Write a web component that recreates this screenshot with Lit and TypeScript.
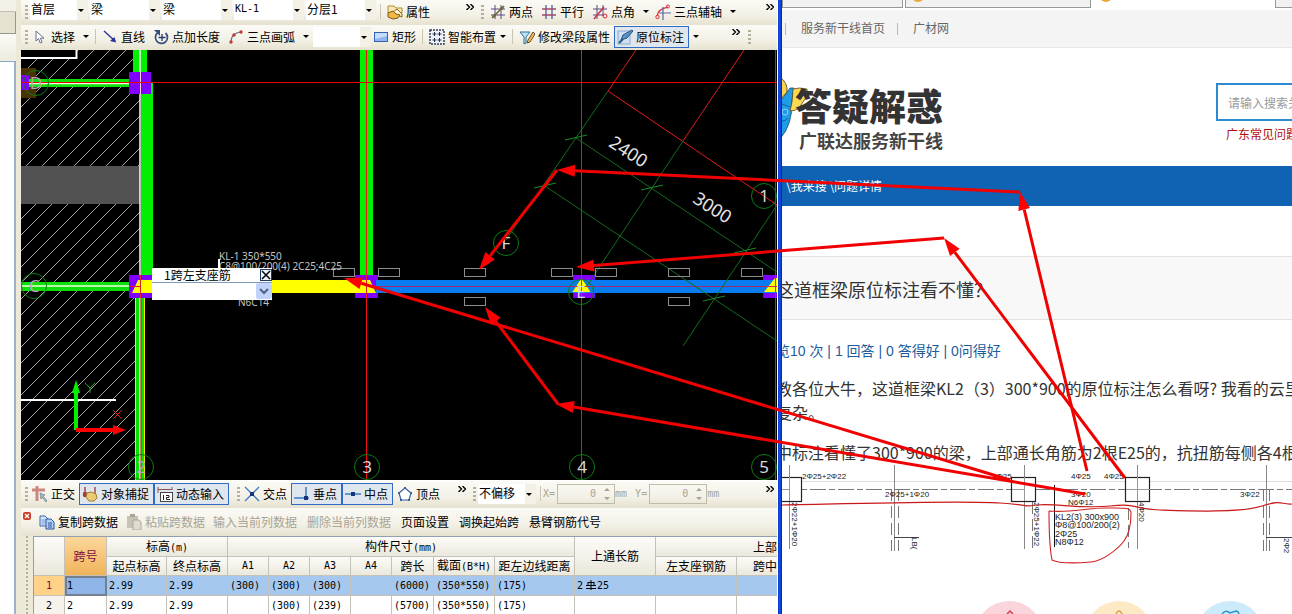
import { LitElement, html, svg, css } from "lit";
import { customElement } from "lit/decorators.js";
import { classMap } from "lit/directives/class-map.js";

const ICONS: Record<string, unknown> = {
  props: svg`<path d="M1 2h6l2 2h6v5H1z" fill="#f8e6b4" stroke="#b58a2e"/><path d="M6 8l4-3 5 5v3l-5-2z" fill="#fff4cc" stroke="#8a6420"/><path d="M1 9l5-2 3 3 4 1-2 3-5 1-5-2z" fill="#f0b840" stroke="#7c5a1c"/>`,
  twoPoint: svg`<path d="M5 1v14M11 1v14M1 5h14M1 11h14" stroke="#5a4a86" fill="none"/><path d="M2 14L14 2" stroke="#6b6534" stroke-width="1.6"/><circle cx="4" cy="12" r="1.6" fill="#6b6534"/><circle cx="12" cy="4" r="1.6" fill="#6b6534"/>`,
  parallel: svg`<path d="M5 1v14M11 1v14" stroke="#4c5ba6" stroke-width="1.3"/><path d="M1 5h14M1 11h14" stroke="#a0496a" stroke-width="1.3"/>`,
  angle: svg`<path d="M5 1v14M11 1v11M1 5h14M1 11h11" stroke="#5a4a86" fill="none"/><path d="M2 15L12 3" stroke="#d0304a" stroke-width="1.5"/><circle cx="13" cy="12" r="2" fill="none" stroke="#e02030"/>`,
  threeAxis: svg`<path d="M2 12Q3 5 13 3" stroke="#d8404a" stroke-width="1.3" fill="none"/><path d="M8 3v13M4 9h12" stroke="#5868a8" stroke-width="1.2"/><circle cx="2.500" cy="13" r="1.700" fill="none" stroke="#e03038"/><circle cx="13" cy="2.500" r="1.500" fill="none" stroke="#e03038"/>`,
  cursor: svg`<path d="M4 2v10l2.500-2.300L8.200 14l1.900-.8L8.400 9.200H12z" fill="#fff" stroke="#667090"/>`,
  line: svg`<path d="M2 2l11 10" stroke="#25309a" stroke-width="1.300"/><path d="M14 13.500l-6-1.500 4.500-4z" fill="#25309a"/>`,
  pointLen: svg`<path d="M5 3.500A6 6 0 1 0 12.500 4" fill="none" stroke="#34507a" stroke-width="1.700"/><path d="M1 1h6v6z" fill="#34507a"/><path d="M9 5v7M5.500 8.500h7" stroke="#2b3a66" stroke-width="1.300"/>`,
  arc: svg`<path d="M3 13Q3 4 13 3" fill="none" stroke="#6b7280" stroke-width="1.200"/><circle cx="3" cy="13" r="1.700" fill="#c03838"/><circle cx="6" cy="6" r="1.700" fill="#c03838"/><circle cx="13" cy="3" r="1.700" fill="#c03838"/>`,
  rect: svg`<rect x="1.500" y="3.500" width="13" height="9" fill="#8fb6f2" stroke="#3461b4"/><path d="M2 4h12v3L2 10z" fill="#c6dcfb"/>`,
  smart: svg`<rect x="1" y="1" width="14" height="14" fill="#eef2f8" stroke="#30405c" stroke-width="1.500" stroke-dasharray="2 1"/><path d="M5.500 3v4M3.500 5h4M10.500 3v4M8.500 5h4M5.500 9v4M3.500 11h4M10.500 9v4M8.500 11h4" stroke="#22304c"/>`,
  modify: svg`<path d="M1 3h10L7 8v6l-2 1V8z" fill="#bfe3f3" stroke="#33709c"/><path d="M9 11l5-8 2 2-5 8-3 1z" fill="#e9c060" stroke="#6d4c1d"/>`,
  annotate: svg`<rect x="1" y="2" width="12" height="13" fill="#cfe0f4" stroke="#8aa8cc"/><path d="M4 11l2-5 9-5 1 1-6 7z" fill="#5c92c8" stroke="#28527f"/><path d="M2 14l4-4" stroke="#28527f" stroke-width="2"/>`,
  ortho: svg`<path d="M0 4h13M5 0v15" stroke="#cc8880" stroke-width="3"/><path d="M8 7l5 2-2 1 4 5-1 1-4-5-1 2z" fill="#a4bcc0" stroke="#6f8c92" stroke-width=".8"/>`,
  snap: svg`<path d="M3 1v8M13 1v7M1 7h4" stroke="#9c3430" stroke-width="1.300"/><circle cx="3" cy="9" r="2.200" fill="#a83c34"/><path d="M5 7l4-1 5 2 1 4-3 3H7l-3-4z" fill="#ecca74" stroke="#a07c30"/>`,
  dyn: svg`<path d="M1 1v6M15 1v3M1 3.500h14" stroke="#8c5050" fill="none"/><rect x="3.500" y="6.500" width="12" height="9" fill="#fff" stroke="#444"/><path d="M6.500 9v5M9 9.500h3v2H9.500v2H13" stroke="#222" fill="none"/>`,
  cross: svg`<path d="M1 1l14 14M15 1L1 15" stroke="#3d7cc4" stroke-width="1.300"/><rect x="6" y="6" width="4" height="4" fill="#16357c"/>`,
  perp: svg`<path d="M0 12h15M12 1v11" stroke="#3d7cc4" stroke-width="1.500"/><rect x="10" y="10" width="4" height="4" fill="#16357c"/>`,
  mid: svg`<path d="M0 8h16" stroke="#3d7cc4" stroke-width="1.500"/><rect x="6" y="6" width="4" height="4" fill="#16357c"/>`,
  vertex: svg`<path d="M8 2l6 5-2 7H4L2 7z" fill="#fff" stroke="#3c5f9e" stroke-width="1.200"/><path d="M7 1h2v2H7zM13 6h2v2h-2zM1 6h2v2H1zM3 13h2v2H3zM11 13h2v2h-2z" fill="#3c5f9e"/>`,
  copy: svg`<path d="M1 2h5l3 3v7H1z" fill="#d7e6fb" stroke="#3867b0"/><path d="M2.500 6h4M2.500 8h4M2.500 10h3" stroke="#6f98d4"/><path d="M7 5h5l3 3v7H7z" fill="#b4d0f6" stroke="#28529c"/><path d="M9 9h4M9 11h4M9 13h4" stroke="#28529c"/>`,
  paste: svg`<path d="M1 2h11v12H1z" fill="#c6c3b6"/><path d="M4 0h5v3H4z" fill="#a8a598"/><path d="M7 6h6l2 2v8H7z" fill="#dedbd0" stroke="#aaa79a"/>`,
};

const icon = (name: string) =>
  html`<svg class="ico" viewBox="0 0 16 16" width="16" height="16" aria-hidden="true">${ICONS[name]}</svg>`;

const tool = (name: string, label: string, cls = "") =>
  html`<button class="tool ${cls}">${icon(name)}<span>${label}</span></button>`;

const drop = (cls = "", label = "展开") =>
  html`<button class="drop ${cls}" aria-label=${label}><svg viewBox="0 0 6 3" width="6" height="3"><path d="M0 0h6L3 3z"/></svg></button>`;

const more = () =>
  html`<button class="more" aria-label="更多"><svg viewBox="0 0 8 6" width="8" height="6"><path d="M.5 0l3 3-3 3M4.500 0l3 3-3 3" fill="none" stroke="#000" stroke-width="1.400"/></svg></button>`;

const picker = (value: string, label: string, cls = "") =>
  html`<select class="pick ${cls}" aria-label=${label}><option>${value}</option></select>`;

const sharedStyles = css`
  * { box-sizing: border-box; }
  button, select, input { font: inherit; color: inherit; margin: 0; border-radius: 0; }
  button { background: none; border: 0; padding: 0; white-space: nowrap; }
  svg { display: block; }
`;

@customElement("cad-canvas")
class CadCanvas extends LitElement {
  static styles = [sharedStyles, css`
    :host { display: block; position: relative; overflow: hidden; background: #000; min-height: 0; }
    .scene { position: absolute; inset: 0; width: 100%; height: 100%; font-family: "Noto Sans", sans-serif; }
    .axis { fill: #d8d8d8; font-size: 17px; text-anchor: middle; }
    .faded { fill: #b4a8bc; }
    .dim { fill: #e4e4e4; font-size: 18px; text-anchor: middle; }
    .tag { fill: #c4c4c4; font-size: 10px; }
    .popup { position: absolute; left: 131px; top: 218px; width: 120px; background: #fff;
      font: 12px/14px "Noto Sans CJK SC", sans-serif; color: #000; }
    .head { display: flex; align-items: center; height: 15px; padding-left: 12px; border-bottom: 1px solid #7f9db9; }
    .head label { flex: 1; white-space: nowrap; }
    .close { width: 12px; height: 12px; border: 1px solid #1c3c66; background: #eef4fa; }
    .value { display: block; width: 100%; height: 17px; border: 0; appearance: none; padding: 0;
      background: url("data:image/svg+xml,%3Csvg xmlns='http://www.w3.org/2000/svg' width='16' height='16'%3E%3Crect width='16' height='16' rx='2' fill='%23c2d3fb'/%3E%3Cpath d='M4 6l4 4 4-4' fill='none' stroke='%234d6185' stroke-width='2'/%3E%3C/svg%3E") right top no-repeat #fff; }
  `];

  render() {
    const bubbles: [string, number, number][] = [
      ["D", 36, 83], ["C", 34, 286], ["F", 506, 243], ["1", 764, 196], ["E", 581, 292],
      ["2", 141, 467], ["3", 367, 467], ["4", 582, 467], ["5", 764, 467],
    ];
    const slots: [number, number][] = [
      [333, 268], [378, 268], [464, 268], [551, 268], [595, 268], [668, 268], [741, 268], [464, 297], [668, 297],
    ];
    const ticks: [number, number][] = [[576, 138], [545, 186], [652, 188], [745, 251], [714, 299]];
    return html`
      <svg class="scene" viewBox="21 50 756 430" preserveAspectRatio="xMinYMin slice">
        <defs>
          <pattern id="hatch" width="16" height="16" patternUnits="userSpaceOnUse">
            <path d="M-1 17L17 -1M-1 1L1 -1M15 17L17 15" stroke="#b4b4b4" stroke-width=".9"/>
          </pattern>
        </defs>
        <rect x="21" y="50" width="119" height="430" fill="url(#hatch)"/>
        <rect x="21" y="50" width="55" height="8" fill="#000"/>
        <path d="M21 58h55.500V50" fill="none" stroke="#fff" stroke-width="2"/>
        <rect x="21" y="166" width="119" height="38" fill="#525252"/>
        <path d="M21 400h95" stroke="#fff" stroke-width="2"/>

        <rect x="21" y="68" width="15" height="30" fill="#4a3200"/>
        <path d="M21 79h110v8H21zM21 282h110v9H21z" fill="#0be00b"/>
        <path d="M21 83.500h110M21 286h118" stroke="#f4ffe0" stroke-width="1.500"/>
        <path d="M133 50h14v24h-14zM141 83h12v193h-12zM360 50h13v226h-13z" fill="#00f000"/>
        <rect x="135" y="298" width="10" height="182" fill="#00e400"/>
        <path d="M135.500 298v182M144.500 298v182" stroke="#f0f000"/>
        <path d="M140 50v430" stroke="#fff" stroke-width="1.500"/>
        <path d="M141 298v182" stroke="#e01010"/>
        <rect x="21" y="75" width="8" height="15" fill="#8000ff"/>
        <path d="M129 72h22v22h-22zM129 275h23v23h-23zM355 275h23v23h-23zM573 275h22v23h-22zM763 275h14v23h-14z" fill="#8000ff"/>
        <path d="M140.500 72v22" stroke="#f4d0d0"/>
        <rect x="21" y="82" width="756" height="1" fill="#e80000"/>
        <rect x="366" y="50" width="1" height="430" fill="#f01010"/>
        <rect x="581" y="50" width="1" height="430" fill="#f01010"/>
        <rect x="775" y="50" width="1" height="430" fill="#f01010"/>
        <rect x="148" y="280" width="213" height="13" fill="#ff0"/>
        <path d="M376 280h401v13H376z" fill="#087cf0"/>
        <path d="M376 286.500h401" stroke="#a02c70"/>
        <path d="M138 280h12v13h-18zM361 280h9l6 13h-15z" fill="#ff0"/>
        <path d="M129 286.500h12M140.500 275v23M366.500 275v23" stroke="#e02020"/>
        <path d="M581.500 278l9 14h-18zM775 278v14h-11zM775 278h2v14h-2z" fill="#ff0"/>
        <path d="M574 286.500h15M581.500 276v22M775.500 276v22M764 286.500h13" stroke="#d03030"/>

        <path d="M636 50L608 91L777 205M744 50L683 141" fill="none" stroke="#e81818"/>
        <path d="M608 91L506 240M683 141L587 286M576 138L777 272M545 186L777 341M777 205L683 346" fill="none" stroke="#126c1c"/>
        ${ticks.map(([x, y]) => svg`<path d="M${x - 11} ${y + 2}L${x + 11} ${y - 3}" stroke="#1c8c28"/>`)}
        ${slots.map(([x, y]) => svg`<rect x=${x + 0.5} y=${y + 0.5} width="21" height="8" fill="none" stroke="#8c8c8c"/>`)}
        ${bubbles.map(([t, x, y]) => svg`
          <circle cx=${x} cy=${y} r="12.500" fill="none" stroke="#0c7c14"/>
          <text class=${x < 200 ? "axis faded" : "axis"} x=${x} y=${y + 6}>${t}</text>`)}
        <text class="dim" transform="translate(625 157) rotate(33)">2400</text>
        <text class="dim" transform="translate(709 213) rotate(33)">3000</text>

        <text class="tag" x="219" y="260">KL-1 350*550</text>
        <text class="tag" x="219" y="270">C8@100/200(4) 2C25;4C25</text>
        <text class="tag" x="238" y="306">N6C14</text>
        <path d="M219 259v9" stroke="#fff" stroke-width="2"/>

        <path d="M76 430V392" stroke="#00f000" stroke-width="4"/>
        <path d="M76 380l4 13h-8z" fill="#00f000"/>
        <path d="M76 430h40" stroke="#f00" stroke-width="4"/>
        <path d="M126 430l-13 5v-10z" fill="#f00"/>
        <path d="M85 383l5 5 5-5M90 388v5" fill="none" stroke="#18a828"/>
        <path d="M113 410l9 9M122 410l-9 9" stroke="#e02020"/>
      </svg>
      <div class="popup">
        <div class="head">
          <label for="span-value">1跨左支座筋</label>
          <button class="close" aria-label="关闭"><svg viewBox="0 0 10 10" width="10" height="10"><path d="M1 1l8 8M9 1L1 9" stroke="#000" stroke-width="1.500"/></svg></button>
        </div>
        <select class="value" id="span-value"><option></option></select>
      </div>
    `;
  }
}

@customElement("cad-window")
class CadWindow extends LitElement {
  static styles = [sharedStyles, css`
    :host { display: grid; grid-template-columns: 21px minmax(0, 1fr) 5px; min-height: 0;
      font: 12px/16px "Noto Sans CJK SC", sans-serif; color: #000; }
    .edge { display: flex; flex-direction: column; background: #fff; border-right: 5px solid #ece9d8; }
    .edge-a { height: 12px; background: #f4f1e8; border-bottom: 1px solid #c4c0b0; }
    .edge-b { height: 22px; background: #e6e2d2; border: solid #9a9688; border-width: 0 1px 1px 0; }
    .edge-c { height: 28px; background: linear-gradient(#fbfaf6, #eeebdf); border-bottom: 1px solid #8fa8c8; }
    .edge-d { flex: 1; border-right: 2px solid #9db0cc; }
    .frame { background: linear-gradient(90deg, #fff 1px, #0a3ccc 1px, #1450e8 3px, #001f9c); z-index: 1; }
    .main { display: flex; flex-direction: column; min-width: 0; min-height: 0; background: #ece9d8; }
    cad-canvas { flex: 1; }
    .bar { display: flex; height: 25px; padding-bottom: 2px; }
    .bar, .status, .actions { background: linear-gradient(#fbfaf5, #f3f1e6 60%, #e6e2d0); }
    .group { display: flex; align-items: center; min-width: 0; padding: 0 3px 0 4px; }
    .first { width: 456px; }
    .rest { flex: 1; }
    .grip { flex: none; width: 3px; height: 14px; background: repeating-linear-gradient(#b4b09c 0 2px, transparent 2px 4px); }
    .tool { display: flex; flex: none; align-items: center; gap: 3px; }
    .tool.on { border: 1px solid #316ac5; background: #dfe6ee; height: 22px; padding: 0 4px 0 2px; }
    .dim { color: #a7a496; }
    .pick { flex: none; width: 70px; height: 20px; border: 0; padding: 0 0 2px 1px; appearance: none; align-self: flex-start;
      background: url("data:image/svg+xml,%3Csvg xmlns='http://www.w3.org/2000/svg' width='11' height='20'%3E%3Crect width='11' height='20' fill='%23f3f1e6'/%3E%3Cpath d='M1 9h6L4 12z'/%3E%3C/svg%3E") right top no-repeat #fff; }
    .short { width: 58px; }
    .mid { align-self: center; }
    .mono { font-family: "DejaVu Sans Mono", monospace; font-size: 10px; }
    .sep { flex: none; width: 1px; height: 15px; background: #c9c5b2; }
    .drop { flex: none; width: 6px; height: 16px; display: flex; align-items: center; }
    .more { flex: none; width: 8px; height: 22px; margin-left: auto; }
    .more svg { margin-bottom: 10px; }
    .m2 { margin-left: 2px; } .m4 { margin-left: 4px; } .m6 { margin-left: 6px; } .m8 { margin-left: 8px; } .m10 { margin-left: 10px; }
    .tail { padding-right: 26px; }
    .status { display: flex; height: 28px; padding-bottom: 2px; border-top: 1px solid #fff; }
    .snaps { width: 448px; }
    .num { display: flex; align-items: center; color: #a7a496; }
    .num label { padding-right: 2px; }
    .num input { width: 58px; height: 20px; border: 1px solid #bfbcac; background: transparent; text-align: right; padding: 0 18px 0 0;
      color: #a7a496; }
    .field { display: flex; align-items: center; position: relative; }
    .spin { position: absolute; right: 5px; top: 4px; }
    .actions { display: flex; height: 28px; align-items: center; }
    .shut { width: 8px; height: 8px; margin: 0 0 12px 2px; background: #c8402c; border-radius: 2px; }
    .sheet { display: flex; height: 78px; overflow: hidden; }
    .side { flex: none; width: 12px; padding-left: 5px; }
    .side .grip { display: block; height: 100%; width: 2px; }
    .wrap { flex: 1; min-width: 0; overflow: hidden; border: solid #8fa0b0; border-width: 1px 0 0 1px; background: #fff; }
    table { table-layout: fixed; width: 865px; border-collapse: separate; border-spacing: 0; }
    th, td { height: 19px; padding: 0; font-weight: 400; white-space: nowrap; overflow: hidden; line-height: 14px;
      vertical-align: middle; border: solid #c4c2b8; border-width: 0 1px 1px 0; }
    th { background: linear-gradient(#fcfbf8, #ebe8dc); text-align: center; }
    .over th { height: 20px; }
    td { padding-left: 2px; text-align: left; height: 20px; }
    .key { background: linear-gradient(#fbd79a, #f0b45c); color: #7a1040; }
    tbody th { background: #f5f3ec; height: 20px; }
    .sel td { background: #a6c8ef; }
    .sel th { background: #ffd288; color: #7a1040; }
    .sel .cur { outline: 2px solid #74808e; outline-offset: -2px; background: #8fb4e8; }
    .bar-mark { display: inline-block; vertical-align: -1px; margin: 0 1px 0 3px; }
    .c31 { width: 31px; } .c41 { width: 41px; } .c42 { width: 42px; } .c60 { width: 60px; }
    .c61 { width: 61px; } .c80 { width: 80px; } .c81 { width: 81px; }
  `];

  private offsetField(axis: string, cls: string) {
    return html`<div class="num mono ${cls}">
      <label for="off-${axis}">${axis}=</label>
      <span class="field"><input id="off-${axis}" value="0" disabled>
        <svg class="spin" viewBox="0 0 6 12" width="6" height="12" aria-hidden="true"><path d="M0 3h6L3 0zM0 9h6l-3 3z" fill="#a7a496"/></svg></span>
      <span>mm</span></div>`;
  }

  render() {
    const cols = [31, 42, 60, 61, 41, 41, 41, 41, 42, 61, 80, 81, 81, 81, 81];
    const rows = [
      ["1", "2.99", "2.99", "(300)", "(300)", "(300)", "", "(6000)", "(350*550)", "(175)", "2#25", "", "", ""],
      ["2", "2.99", "2.99", "", "(300)", "(239)", "", "(5700)", "(350*550)", "(175)", "", "", "", ""],
    ];
    const mark = html`<svg class="bar-mark" viewBox="0 0 10 10" width="10" height="10"><path d="M5 0v10M0 8.500h10M0 5.500h10" stroke="#000"/><rect x="2" y="2.500" width="6" height="3" fill="none" stroke="#000"/></svg>`;
    return html`
      <div class="edge"><div class="edge-a"></div><div class="edge-b"></div><div class="edge-c"></div><div class="edge-d"></div></div>
      <div class="main">
        <div class="bar">
          <div class="group first">
            <i class="grip"></i>
            ${picker("首层", "楼层", "short m2")}${picker("梁", "构件类型", "m2")}${picker("梁", "构件", "m2")}
            ${picker("KL-1", "名称", "mono m2")}${picker("分层1", "分层", "m2")}
            <i class="sep m4"></i>${tool("props", "属性", "m6")}${more()}
          </div>
          <div class="group rest">
            <i class="grip"></i>
            ${tool("twoPoint", "两点", "m6")}${tool("parallel", "平行", "m8")}${tool("angle", "点角", "m8")}${drop("m8")}
            ${tool("threeAxis", "三点辅轴", "m6")}${drop("m8")}${more()}
          </div>
        </div>
        <div class="bar">
          <div class="group rest tail">
            <i class="grip"></i>
            ${tool("cursor", "选择", "m4")}${drop("m8")}<i class="sep m6"></i>
            ${tool("line", "直线", "m6")}${tool("pointLen", "点加长度", "m8")}${tool("arc", "三点画弧", "m8")}${drop("m8")}
            ${picker("", "参数", "short mid m4")}${tool("rect", "矩形", "m2")}<i class="sep m6"></i>
            ${tool("smart", "智能布置", "m6")}${drop("m4")}<i class="sep m6"></i>
            ${tool("modify", "修改梁段属性", "m6")}${tool("annotate", "原位标注", "on m4")}${drop("m4")}
            ${more()}<i class="grip m8"></i>
          </div>
        </div>
        <cad-canvas></cad-canvas>
        <div class="status">
          <div class="group snaps">
            <i class="grip"></i>
            ${tool("ortho", "正交", "m4")}${tool("snap", "对象捕捉", "on m4")}${tool("dyn", "动态输入", "on")}
            <i class="grip m8"></i>
            ${tool("cross", "交点", "m4")}${tool("perp", "垂点", "on m4")}${tool("mid", "中点", "on")}${tool("vertex", "顶点", "m4")}${more()}
          </div>
          <div class="group rest">
            <i class="grip"></i>${picker("不偏移", "偏移方式", "short mid m2")}<i class="sep m4"></i>
            ${this.offsetField("X", "m2")}${this.offsetField("Y", "m8")}${more()}
          </div>
        </div>
        <div class="actions">
          <button class="shut" aria-label="关闭"><svg viewBox="0 0 8 8" width="8" height="8"><path d="M2 2l4 4M6 2L2 6" stroke="#fff" stroke-width="1.300"/></svg></button>
          ${tool("copy", "复制跨数据", "m8")}${tool("paste", "粘贴跨数据", "dim m8")}
          <button class="dim m8">输入当前列数据</button><button class="dim m10">删除当前列数据</button>
          <button class="m10">页面设置</button><button class="m10">调换起始跨</button><button class="m10">悬臂钢筋代号</button>
        </div>
        <div class="sheet">
          <div class="side"><i class="grip"></i></div>
          <div class="wrap">
            <table>
              <colgroup>${cols.map((c) => html`<col class="c${c}">`)}</colgroup>
              <thead>
                <tr class="over"><th rowspan="2"></th><th rowspan="2" class="key">跨号</th><th colspan="2">标高<span class="mono">(m)</span></th>
                  <th colspan="7">构件尺寸<span class="mono">(mm)</span></th><th rowspan="2">上通长筋</th><th colspan="3">上部钢筋</th></tr>
                <tr><th>起点标高</th><th>终点标高</th><th class="mono">A1</th><th class="mono">A2</th><th class="mono">A3</th><th class="mono">A4</th>
                  <th>跨长</th><th>截面<span class="mono">(B*H)</span></th><th>距左边线距离</th><th>左支座钢筋</th><th>跨中钢筋</th><th>右支座钢筋</th></tr>
              </thead>
              <tbody>
                ${rows.map((r, i) => html`<tr class=${classMap({ sel: i === 0 })}>
                  <th class="mono">${i + 1}</th>
                  ${r.map((v, j) => html`<td class=${classMap({ mono: true, cur: i === 0 && j === 0 })}>${v.includes("#") ? html`2${mark}25` : v}</td>`)}
                </tr>`)}
              </tbody>
            </table>
          </div>
        </div>
      </div>
      <div class="frame"></div>
    `;
  }
}

@customElement("forum-page")
class ForumPage extends LitElement {
  static styles = [sharedStyles, css`
    :host { display: flex; flex-direction: column; min-width: 0; min-height: 0; overflow: hidden; background: #fff;
      font: 12px/18px "Noto Sans CJK SC", sans-serif; color: #333; }
    a { color: inherit; text-decoration: none; }
    .tabs { display: flex; flex: none; height: 10px; gap: 2px; background: #fff; }
    .tab { flex: none; height: 8px; background: #f1f1f1; border: solid #999; border-width: 0 1px 1px; overflow: hidden; padding-left: 6px; }
    .t1 { width: 121px; } .t2 { width: 186px; } .t3 { width: 180px; background: #fff; border-color: #fff; } .t4 { width: 180px; }
    .fav { width: 12px; height: 12px; border-radius: 50%; background: #e8a838; margin-top: -10px; }
    .nav { display: flex; flex: none; align-items: center; height: 38px; padding-left: 3px; gap: 12px; background: #f4f4f4;
      border-bottom: 1px solid #e8e8e8; color: #666; white-space: nowrap; }
    .nav i { width: 1px; height: 12px; background: #b8b8b8; }
    .nav a { padding: 0 0 2px 3px; }
    .top { display: flex; flex: none; height: 118px; justify-content: space-between; overflow: hidden; }
    .logo { display: flex; }
    .mascot { flex: none; margin-top: 28px; }
    .brand { display: flex; flex-direction: column; margin: 32px 0 0 -15px; font-weight: 700; white-space: nowrap; }
    .name { font-size: 37px; line-height: 50px; color: #333; font-weight: 900; }
    .sub { font-size: 18px; line-height: 20px; color: #444; padding-left: 4px; }
    .find { flex: none; width: 76px; padding-top: 35px; }
    .find input { display: block; width: 400px; height: 38px; border: 2px solid #2f8bd0; padding: 0 10px; background: #fff; outline: 0; }
    .find input::placeholder { color: #999; opacity: 1; }
    .hot { display: block; padding: 4px 0 0 10px; color: #b01010; white-space: nowrap; }
    .crumb { flex: none; height: 40px; background: #0f63b2; color: #fff; line-height: 40px; padding-left: 4px; white-space: pre; }
    .title { flex: none; height: 64px; margin: 50px 0 0; background: #f8f8f8; border: solid #e2e2e2; border-width: 1px 0;
      font-size: 18px; line-height: 64px; font-weight: 400; }
    .pull { display: block; margin-left: -6px; white-space: nowrap; }
    .meta { flex: none; font: 14px/22px "Liberation Sans", "Noto Sans CJK SC", sans-serif; color: #1d5c9c; padding-top: 20px; }
    .body { flex: none; margin: 0; font-size: 16px; line-height: 24px; }
    .lead { padding-top: 14px; } .next { padding: 16px 0 1px; }
    .plan { flex: none; width: 100%; height: 136px; font-family: "Liberation Sans", sans-serif; font-size: 8px; }
    .note { font-size: 9px; }
    .foot { flex: none; width: 100%; height: 13px; }
  `];

  render() {
    const posts = [[1011.5, 477], [1125.5, 477], [777.5, 477]];
    const marks: [number, number, string][] = [
      [802, 479, "2Φ25+2Φ22"], [885, 497, "2Φ25+1Φ20"], [992, 479, "4Φ25"], [1071, 479, "4Φ25"], [1104, 479, "4Φ25"],
      [1071, 497, "3Φ20"], [1068, 505, "N6Φ12"], [1240, 497, "3Φ22"],
    ];
    const upright: [number, number, string][] = [
      [792, 502, "2Φ22+1Φ20"], [1034, 502, "2Φ25+1Φ22"], [1139, 502, "4Φ20"], [912, 537, "LB("], [1284, 538, "2Φ2"],
    ];
    return html`
      <div class="tabs"><div class="tab t1"></div><div class="tab t2"><div class="fav"></div></div><div class="tab t3"><div class="fav"></div></div><div class="tab t4"></div></div>
      <nav class="nav"><i></i><a href="#">服务新干线首页</a><i></i><a href="#">广材网</a></nav>
      <header class="top">
        <div class="logo">
          <svg class="mascot" viewBox="782 76 28 66" width="28" height="66" aria-hidden="true">
            <path d="M780 102l10-14h4l-2 12q1 24-12 39z" fill="#1e9ee8" stroke="#1b4d70" stroke-width=".8"/>
            <path d="M780 77q8 6 7 15l-7 8z" fill="#fbd24c" stroke="#40382a" stroke-width=".8"/>
            <path d="M793 89q6-2 14 0q2 5-2 10l-6 9q-4 3-9 3q3-10 3-22z" fill="#fbd850" stroke="#5a4a20" stroke-width=".8"/>
            <circle cx="785" cy="112" r="3" fill="none" stroke="#8fd0fa"/><path d="M782 104l8 3M782 121q4 0 6-3" fill="none" stroke="#16629a"/>
          </svg>
          <div class="brand"><span class="name">答疑解惑</span><span class="sub">广联达服务新干线</span></div>
        </div>
        <div class="find"><input aria-label="搜索" placeholder="请输入搜索关键字"><a class="hot" href="#">广东常见问题</a></div>
      </header>
      <div class="crumb">\\我来搜 \\问题详情</div>
      <h1 class="title"><span class="pull">这道框梁原位标注看不懂？</span></h1>
      <div class="meta"><span class="pull">览10 次 | 1 回答 | 0 答得好 | 0问得好</span></div>
      <p class="body lead"><span class="pull">教各位大牛，这道框梁KL2（3）300*900的原位标注怎么看呀? 我看的云里</span><span class="pull">复杂。</span></p>
      <p class="body next"><span class="pull">中标注看懂了300*900的梁，上部通长角筋为2根E25的，抗扭筋每侧各4根</span></p>
      <svg class="plan" viewBox="782 465 510 136" preserveAspectRatio="xMinYMin slice">
        <path d="M782 481.500h510" stroke="#ddd"/>
        <path d="M782 489.500h510" stroke="#777" stroke-dasharray="16 3 6 3"/>
        <path d="M789.500 465v84M894.500 465v86M1024.500 465v84M1137.500 465v84M1266.500 465v86" stroke="#888"/>
        <path d="M891.500 489v62M898.500 489v62M1032.500 502v46M1128.500 508v40M1263.500 489v62M1269.500 489v62" stroke="#777" stroke-dasharray="12 5"/>
        <path d="M894 537.500h25M1266 537.500h26" stroke="#444"/>
        ${posts.map(([x, y]) => svg`<rect x=${x} y=${y + 0.5} width="24" height="24" fill="#fff" stroke="#222" stroke-width="1.200"/>`)}
        <path d="M789.500 477v24M1024.500 477v24M1137.500 477v24M778 489.500h12M1012 489.500h12M1126 489.500h24" stroke="#999"/>
        ${marks.map(([x, y, t]) => svg`<text x=${x} y=${y} fill="#222">${t}</text>`)}
        ${upright.map(([x, y, t]) => svg`<text transform="translate(${x} ${y}) rotate(90)" fill="#222">${t}</text>`)}
        <path d="M1054.500 485v62" stroke="#111"/>
        <g class="note" fill="#222"><text x="1055" y="520">KL2(3) 300x900</text><text x="1055" y="528">Φ8@100/200(2)</text><text x="1055" y="537">2Φ25</text><text x="1055" y="545">N8Φ12</text></g>
        <path d="M782 505C850 504 960 500 1000 503S1020 507 1037 505S1080 509 1110 506S1130 509 1160 510S1240 513 1262 506S1280 505 1292 504" fill="none" stroke="#c81818" stroke-width="1.200"/>
        <path d="M1049 511C1070 513 1086 508 1105 508S1131 507 1131 513S1130 533 1124 541S1103 561 1091 562S1060 564 1052 560C1049 545 1049 530 1049 511" fill="none" stroke="#d02020" stroke-width="1.100"/>
      </svg>
      <svg class="foot" viewBox="782 601 510 13" preserveAspectRatio="xMinYMin slice" aria-hidden="true">
        <circle cx="1009" cy="635" r="34" fill="#fbd5dc"/><circle cx="1119" cy="635" r="34" fill="#fde9c4"/><circle cx="1230" cy="635" r="34" fill="#cdeafa"/>
        <path d="M1007 614l3-3 3 3" fill="none" stroke="#d04050" stroke-width="1.500"/>
        <path d="M1116 614q3-6 6 0" fill="none" stroke="#dba040" stroke-width="1.500"/>
        <path d="M1222 614q4-5 8-1l6-2q4 1 2 4" fill="none" stroke="#2c94cc" stroke-width="1.500"/>
      </svg>
    `;
  }
}

@customElement("app-root")
class AppRoot extends LitElement {
  static styles = css`
    :host { display: grid; grid-template-columns: minmax(0, 782fr) minmax(0, 510fr); grid-template-rows: minmax(0, 1fr);
      position: relative; height: 100vh; overflow: hidden; }
    cad-window { position: relative; z-index: 1; }
    .links { position: absolute; inset: 0; width: 100%; height: 100%; z-index: 2; pointer-events: none; }
  `;

  // Each link runs from its start point to the arrow tip.
  private links = [
    [1020, 192, 557, 170], [557, 170, 479, 270], [1087, 471, 1020, 192], [944, 238, 576, 267],
    [1125, 478, 944, 238], [1010, 480, 344, 278], [1085, 494, 556, 404], [558, 404, 485, 307],
  ];

  private arrow([x1, y1, x2, y2]: number[]) {
    const len = Math.hypot(x2 - x1, y2 - y1);
    const ux = (x2 - x1) / len;
    const uy = (y2 - y1) / len;
    const bx = x2 - ux * 18;
    const by = y2 - uy * 18;
    return svg`<path d="M${x1} ${y1}L${bx} ${by}" stroke="#f00000" stroke-width="3"/>
      <path d="M${x2} ${y2}L${bx - uy * 6} ${by + ux * 6}L${bx + uy * 6} ${by - ux * 6}z" fill="#f00"/>`;
  }

  render() {
    return html`
      <cad-window></cad-window>
      <forum-page></forum-page>
      <svg class="links" viewBox="0 0 1292 614" preserveAspectRatio="none" aria-hidden="true">${this.links.map((l) => this.arrow(l))}</svg>
    `;
  }
}
